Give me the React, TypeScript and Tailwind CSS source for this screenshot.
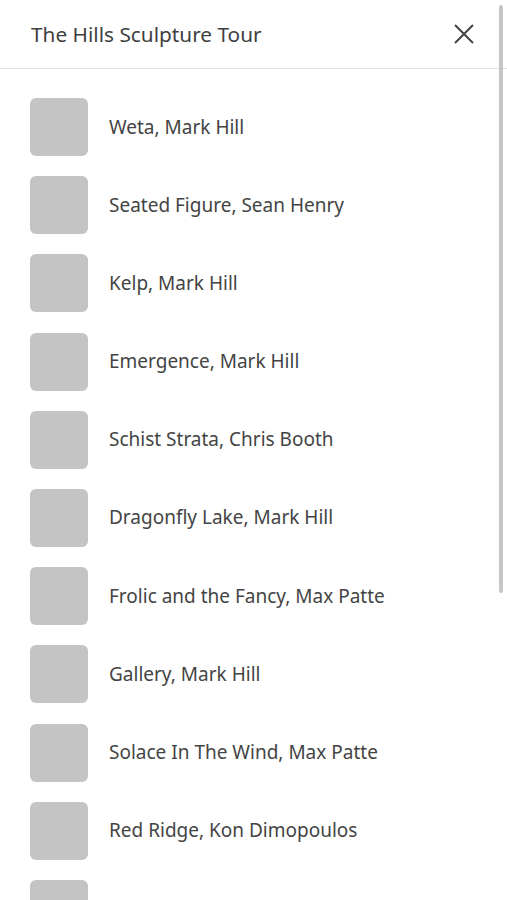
import React from 'react';

const stops = [
  'Weta, Mark Hill',
  'Seated Figure, Sean Henry',
  'Kelp, Mark Hill',
  'Emergence, Mark Hill',
  'Schist Strata, Chris Booth',
  'Dragonfly Lake, Mark Hill',
  'Frolic and the Fancy, Max Patte',
  'Gallery, Mark Hill',
  'Solace In The Wind, Max Patte',
  'Red Ridge, Kon Dimopoulos',
  'Kina, Mark Hill',
];

export default function App() {
  return (
    <div className="relative h-[900px] w-full overflow-hidden bg-white font-['Noto_Sans',sans-serif] text-[#444]">
      <header className="flex h-[69px] items-center justify-between border-b border-[#e3e3e3] pl-[31px] pr-[31px]">
        <h1 className="text-[20.8px] leading-none text-[#3f3f3f]">The Hills Sculpture Tour</h1>
        <button className="flex h-6 w-6 items-center justify-center text-[#444]" aria-label="Close">
          <svg width="22" height="22" viewBox="0 0 22 22" fill="none" stroke="currentColor" strokeWidth="2">
            <path d="M2 2 L20 20 M20 2 L2 20" />
          </svg>
        </button>
      </header>

      <ul className="flex flex-col gap-[20.2px] pt-[29px] pl-[30px]">
        {stops.map((name) => (
          <li key={name} className="flex items-center gap-[21px]">
            <div className="h-[58px] w-[58px] shrink-0 rounded-[6px] bg-[#c4c4c4]" />
            <span className="text-[19px] leading-none text-[#444]">{name}</span>
          </li>
        ))}
      </ul>

      {/* overlay scrollbar */}
      <div className="absolute right-[4px] top-[5px] h-[588px] w-[4px] rounded-full bg-[#c6c6c6]" />
    </div>
  );
}
